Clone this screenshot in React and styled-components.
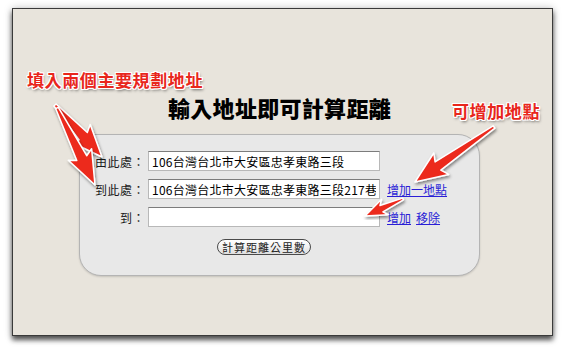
import React from "react";
import styled, { createGlobalStyle } from "styled-components";

const Global = createGlobalStyle`
  html, body { margin: 0; padding: 0; background: #ffffff; }
  body { font-family: "Noto Sans CJK TC", "Noto Sans", sans-serif; }
`;

const Stage = styled.div`
  position: relative;
  width: 564px;
  height: 350px;
  overflow: hidden;
  padding: 8px 0 0 12px;
  box-sizing: border-box;
`;

const Frame = styled.div`
  width: 541px;
  height: 328px;
  box-sizing: border-box;
  border: 1px solid #3a3a3a;
  background: #e8e4dc;
  box-shadow: 0 4px 5px rgba(0, 0, 0, 0.65), 0 0 8px rgba(0, 0, 0, 0.22);
  padding: 85px 0 0 66px;
`;

const Column = styled.div`
  width: 401px;
  display: flex;
  flex-direction: column;
`;

const Title = styled.h1`
  margin: 0 0 14px 0;
  font-size: 22px;
  line-height: 26px;
  font-weight: 900;
  color: #000;
  text-align: center;
  letter-spacing: 0.3px;
`;

const Panel = styled.div`
  box-sizing: border-box;
  width: 401px;
  height: 142px;
  background: #e8e8e8;
  border: 1px solid #b4b4b4;
  border-radius: 10px 22px 22px 22px;
  box-shadow: 0 1px 2px rgba(0, 0, 0, 0.15);
  padding-top: 16px;
  display: grid;
  grid-template-columns: 68px 232px auto;
  grid-auto-rows: 20px;
  row-gap: 8px;
  align-items: center;
`;

const Label = styled.label`
  font-size: 12px;
  color: #1a1a1a;
  text-align: right;
  padding-right: 3px;
  white-space: nowrap;
  letter-spacing: 0.5px;
`;

const Input = styled.input`
  box-sizing: border-box;
  width: 232px;
  height: 20px;
  margin: 0;
  padding: 0 3px;
  border: 1px solid #b8b8b8;
  border-top-color: #7c7c7c;
  background: #fff;
  font-family: "Noto Sans CJK TC", sans-serif;
  font-size: 12px;
  letter-spacing: 0.25px;
  color: #000;
  outline: none;
`;

const Links = styled.div`
  display: flex;
  gap: 5px;
  padding-left: 7px;
`;

const Link = styled.a`
  font-size: 12px;
  color: #2a1ed6;
  text-decoration: underline;
  white-space: nowrap;
  cursor: pointer;
`;

const ButtonCell = styled.div`
  grid-column: 2;
  display: flex;
  justify-content: center;
  margin-top: 3px;
`;

const PillButton = styled.button`
  box-sizing: border-box;
  width: 94px;
  height: 16px;
  padding: 0;
  border: 1px solid #4a4a4a;
  border-radius: 8px;
  background: linear-gradient(#ffffff, #f2f2f2 50%, #dedede);
  font-family: "Noto Sans CJK TC", sans-serif;
  font-size: 11px;
  line-height: 14px;
  letter-spacing: 1px;
  color: #222;
`;

const Note = styled.div`
  position: absolute;
  left: ${(p) => p.$x}px;
  top: ${(p) => p.$y}px;
  font-size: 17px;
  line-height: 22px;
  font-weight: 700;
  letter-spacing: 0.6px;
  color: #e8261c;
  white-space: nowrap;
  text-shadow: -1px -1px 0 #fff, 1px -1px 0 #fff, -1px 1px 0 #fff, 1px 1px 0 #fff,
    0 -1px 0 #fff, 0 1px 0 #fff, -1px 0 0 #fff, 1px 0 0 #fff,
    1px 2px 3px rgba(0, 0, 0, 0.55);
`;

const Overlay = styled.svg`
  position: absolute;
  left: 0;
  top: 0;
  pointer-events: none;
`;

function arrowPts(x1, y1, x2, y2, headLen, headW, tailW, neckW) {
  const dx = x2 - x1;
  const dy = y2 - y1;
  const L = Math.hypot(dx, dy);
  const ux = dx / L, uy = dy / L;
  const nx = -uy, ny = ux;
  const bx = x2 - ux * headLen, by = y2 - uy * headLen;
  const p = (x, y) => `${x.toFixed(1)},${y.toFixed(1)}`;
  return [
    p(x1 + nx * tailW / 2, y1 + ny * tailW / 2),
    p(bx + nx * neckW / 2, by + ny * neckW / 2),
    p(bx - ux * 4 + nx * headW / 2, by - uy * 4 + ny * headW / 2),
    p(x2, y2),
    p(bx - ux * 4 - nx * headW / 2, by - uy * 4 - ny * headW / 2),
    p(bx - nx * neckW / 2, by - ny * neckW / 2),
    p(x1 - nx * tailW / 2, y1 - ny * tailW / 2),
  ].join(" ");
}

const arrows = [
  { x1: 55, y1: 105, x2: 102, y2: 157, hl: 28, hw: 26, tw: 3, nw: 11 },
  { x1: 57, y1: 108, x2: 95, y2: 185, hl: 30, hw: 26, tw: 3, nw: 11 },
  { x1: 494, y1: 127, x2: 415, y2: 182, hl: 28, hw: 26, tw: 3, nw: 10 },
  { x1: 403, y1: 199, x2: 365, y2: 216, hl: 18, hw: 17, tw: 2, nw: 7 },
];

export default function App() {
  return (
    <>
      <Global />
      <Stage>
        <Frame>
          <Column>
            <Title>輸入地址即可計算距離</Title>
            <Panel>
              <Label>由此處：</Label>
              <Input defaultValue="106台灣台北市大安區忠孝東路三段" />
              <span />
              <Label>到此處：</Label>
              <Input defaultValue="106台灣台北市大安區忠孝東路三段217巷" />
              <Links>
                <Link>增加一地點</Link>
              </Links>
              <Label>到：</Label>
              <Input defaultValue="" />
              <Links>
                <Link>增加</Link>
                <Link>移除</Link>
              </Links>
              <ButtonCell>
                <PillButton>計算距離公里數</PillButton>
              </ButtonCell>
            </Panel>
          </Column>
        </Frame>
        <Note $x={27} $y={69}>填入兩個主要規劃地址</Note>
        <Note $x={452} $y={100}>可增加地點</Note>
        <Overlay width="564" height="350" viewBox="0 0 564 350">
          <defs>
            <filter id="sh" x="-20%" y="-20%" width="140%" height="140%">
              <feDropShadow dx="1" dy="2" stdDeviation="1.5" floodColor="#000" floodOpacity="0.45" />
            </filter>
          </defs>
          {arrows.map((a, i) => (
            <polygon
              key={i}
              points={arrowPts(a.x1, a.y1, a.x2, a.y2, a.hl, a.hw, a.tw, a.nw)}
              fill="#ec2a1f"
              stroke="#ffffff"
              strokeWidth="1.5"
              strokeLinejoin="round"
              filter="url(#sh)"
            />
          ))}
        </Overlay>
      </Stage>
    </>
  );
}
